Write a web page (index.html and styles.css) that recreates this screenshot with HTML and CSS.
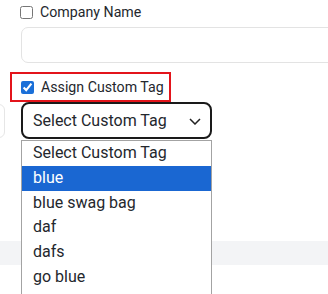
FILE: index.html
```html
<!DOCTYPE html>
<html lang="en">
<head>
  <meta charset="UTF-8">
  <title>Custom Tag</title>
  <link rel="stylesheet" href="styles.css">
</head>
<body>
  <div class="form">
    <label class="check-row company">
      <input type="checkbox">
      <span>Company Name</span>
    </label>
    <input type="text" class="text-input">

    <label class="check-row tag-toggle">
      <input type="checkbox" checked>
      <span>Assign Custom Tag</span>
    </label>

    <div class="select-row">
      <div class="side-box"></div>
      <div class="select-wrap">
        <div class="select">
          <span>Select Custom Tag</span>
          <svg class="chevron" width="12" height="7" viewBox="0 0 12 7">
            <path d="M1 1l5 5 5-5" fill="none" stroke="#222" stroke-width="1.5"/>
          </svg>
        </div>
        <!-- open option list -->
        <ul class="options">
          <li>Select Custom Tag</li>
          <li class="active">blue</li>
          <li>blue swag bag</li>
          <li>daf</li>
          <li>dafs</li>
          <li>go blue</li>
        </ul>
      </div>
    </div>

    <div class="band"></div>
  </div>
</body>
</html>
```
FILE: styles.css
```css
html {
  overflow: hidden;
}

body {
  margin: 0;
  min-height: 340px;
  background: #fff;
  font-family: Roboto, "Noto Sans", sans-serif;
  color: #24272d;
}

.form {
  padding-top: 2px;
}

.check-row {
  display: flex;
  align-items: center;
  gap: 7px;
  font-size: 14.2px;
  line-height: 20px;
  white-space: nowrap;
}

.check-row input {
  width: 13px;
  height: 13px;
  margin: 0;
  accent-color: #1a6fd8;
}

.company {
  padding-left: 20px;
  height: 20px;
}

.text-input {
  display: block;
  box-sizing: border-box;
  margin: 5px 0 0 21px;
  width: 400px;
  height: 36px;
  border: 1px solid #e3e3e3;
  border-radius: 7px;
}

.tag-toggle {
  width: 161px;
  box-sizing: border-box;
  margin: 9px 0 0 10px;
  padding: 3px 0 3px 9px;
  border: 2px solid #e3141b;
}

.select-row {
  display: flex;
  align-items: flex-start;
}

.side-box {
  box-sizing: border-box;
  width: 15px;
  height: 34px;
  margin: 2px 0 0 -10px;
  border: 1px solid #e6e6e6;
  border-radius: 6px;
}

.select-wrap {
  position: relative;
  margin-left: 16px;
}

.select {
  box-sizing: border-box;
  width: 191px;
  height: 37px;
  display: flex;
  align-items: center;
  justify-content: space-between;
  padding: 0 9px 0 10px;
  border: 2px solid #1a1a1a;
  border-radius: 8px;
  font-size: 16px;
  white-space: nowrap;
}

.chevron {
  margin-top: 1px;
}

.options {
  position: absolute;
  top: 38px;
  left: 0;
  width: 191px;
  box-sizing: border-box;
  margin: 0;
  padding: 0 0 20px;
  list-style: none;
  background: #fff;
  border: 1px solid #a3a3a3;
  z-index: 2;
  font-size: 16px;
}

.options li {
  height: 24.8px;
  line-height: 24.8px;
  padding-left: 11px;
}

.options li.active {
  background: #1a67d2;
  color: #fff;
}

.band {
  margin-top: 102px;
  height: 24px;
  background: #f3f4f6;
}
```
